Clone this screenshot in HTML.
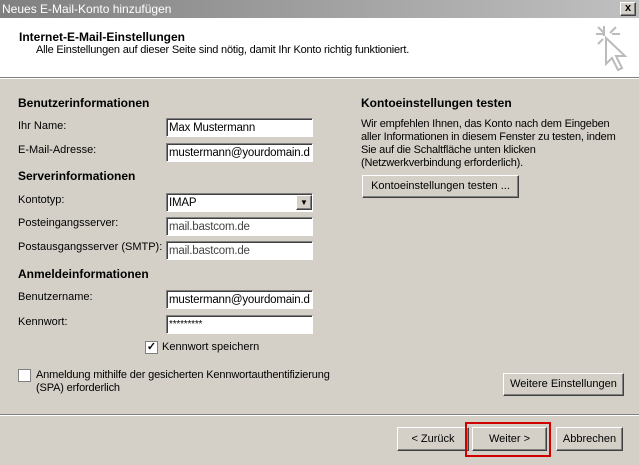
<!DOCTYPE html><html><head><style>
body{margin:0;width:639px;height:465px;background:#d4d0c8;font-family:"Liberation Sans",sans-serif;font-size:11px;color:#000;position:relative;overflow:hidden}
.a{position:absolute;white-space:nowrap}
.b{font-weight:bold;font-size:12px}
.in{position:absolute;background:#fff;border:1px solid;border-color:#808080 #fff #fff #808080;box-shadow:inset 1px 1px 0 #404040;height:19px;width:147px;font-size:11.5px;line-height:18px;padding-left:2px;box-sizing:border-box;overflow:hidden;white-space:nowrap;letter-spacing:-0.2px}
.btn{position:absolute;background:#d4d0c8;border:1px solid;border-color:#fff #404040 #404040 #fff;box-shadow:inset -1px -1px 0 #808080;box-sizing:border-box;text-align:center;font-size:11px}
</style></head><body>
<div class="a" style="left:0;top:0;width:639px;height:18px;background:linear-gradient(90deg,#808080,#c0c0c0);color:#fff;font-size:12px;line-height:18px;padding-left:2px;box-sizing:border-box">Neues E-Mail-Konto hinzufügen</div>
<div class="btn" style="left:620px;top:2px;width:16px;height:14px;font-size:11px;line-height:11px;font-weight:bold">x</div>
<div class="a" style="left:0;top:18px;width:639px;height:59px;background:#fff;border-bottom:1px solid #808080;box-shadow:0 1px 0 #fff"></div>
<div class="a b" style="left:19px;top:30px">Internet-E-Mail-Einstellungen</div>
<div class="a" style="left:36px;top:44px;letter-spacing:-0.2px">Alle Einstellungen auf dieser Seite sind nötig, damit Ihr Konto richtig funktioniert.</div>
<svg class="a" style="left:594px;top:24px" width="36" height="50"><g stroke="#bbb" stroke-width="2" fill="none"><path d="M10 2v10M2 10h8M18 10h8M4 3l6 6M22 3l-6 6M4 20l5-5"/><path d="M12 14v26l6-6 6 12 4-2-6-12h9z" fill="#fff"/></g></svg>
<div class="a b" style="left:18px;top:96px">Benutzerinformationen</div>
<div class="a" style="left:18px;top:120px">Ihr Name:</div>
<div class="in" style="left:166px;top:118px">Max Mustermann</div>
<div class="a" style="left:18px;top:144px">E-Mail-Adresse:</div>
<div class="in" style="left:166px;top:143px">mustermann@yourdomain.d</div>
<div class="a b" style="left:18px;top:169px">Serverinformationen</div>
<div class="a" style="left:18px;top:194px">Kontotyp:</div>
<div class="in" style="left:166px;top:193px;color:#000">IMAP</div>
<div class="btn" style="left:296px;top:195px;width:16px;height:15px;font-size:8px;line-height:13px">▼</div>
<div class="a" style="left:18px;top:217px">Posteingangsserver:</div>
<div class="in" style="left:166px;top:217px;color:#444">mail.bastcom.de</div>
<div class="a" style="left:18px;top:241px">Postausgangsserver (SMTP):</div>
<div class="in" style="left:166px;top:241px;color:#444">mail.bastcom.de</div>
<div class="a b" style="left:18px;top:267px">Anmeldeinformationen</div>
<div class="a" style="left:18px;top:291px">Benutzername:</div>
<div class="in" style="left:166px;top:290px">mustermann@yourdomain.d</div>
<div class="a" style="left:18px;top:316px">Kennwort:</div>
<div class="in" style="left:166px;top:315px;font-size:10px">*********</div>
<div class="a" style="left:145px;top:341px;width:13px;height:13px;background:#fff;border:1px solid #808080;box-sizing:border-box;font-size:11px;line-height:11px;text-align:center;font-weight:bold">✓</div>
<div class="a" style="left:162px;top:341px">Kennwort speichern</div>
<div class="a" style="left:18px;top:369px;width:13px;height:13px;background:#fff;border:1px solid #808080;box-sizing:border-box"></div>
<div class="a" style="left:36px;top:369px;line-height:13px;letter-spacing:-0.15px">Anmeldung mithilfe der gesicherten Kennwortauthentifizierung<br>(SPA) erforderlich</div>
<div class="a b" style="left:361px;top:96px">Kontoeinstellungen testen</div>
<div class="a" style="left:361px;top:118px;line-height:13px;letter-spacing:-0.2px">Wir empfehlen Ihnen, das Konto nach dem Eingeben<br>aller Informationen in diesem Fenster zu testen, indem<br>Sie auf die Schaltfläche unten klicken<br>(Netzwerkverbindung erforderlich).</div>
<div class="btn" style="left:362px;top:175px;width:157px;height:23px;line-height:21px">Kontoeinstellungen testen ...</div>
<div class="btn" style="left:503px;top:373px;width:121px;height:23px;line-height:21px">Weitere Einstellungen</div>
<div class="a" style="left:0;top:414px;width:639px;border-top:1px solid #808080;border-bottom:1px solid #fff"></div>
<div class="btn" style="left:397px;top:427px;width:72px;height:24px;line-height:22px">&lt; Zurück</div>
<div class="btn" style="left:472px;top:427px;width:75px;height:24px;line-height:22px">Weiter &gt;</div>
<div class="a" style="left:465px;top:422px;width:86px;height:35px;border:2px solid #d00000;box-sizing:border-box"></div>
<div class="btn" style="left:556px;top:427px;width:67px;height:24px;line-height:22px">Abbrechen</div>
</body></html>
